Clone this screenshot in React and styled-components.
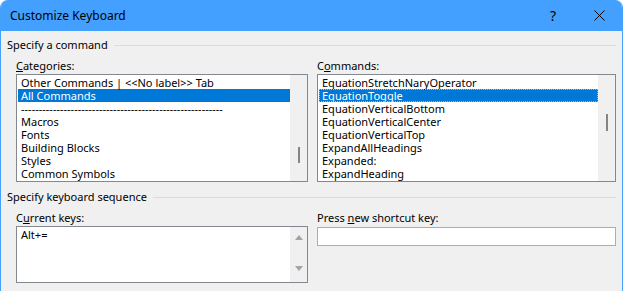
import React from 'react';
import styled, { createGlobalStyle } from 'styled-components';

const GlobalStyle = createGlobalStyle`
  html, body {
    margin: 0;
    background: #fff;
  }
  body {
    font-family: "Noto Sans", "Liberation Sans", sans-serif;
    font-size: 11px;
    color: #000;
  }
`;

const Window = styled.div`
  width: 623px;
  height: 291px;
  box-sizing: border-box;
  border-left: 1px solid #43a0ff;
  border-right: 1px solid #43a0ff;
  border-radius: 8px 8px 0 0;
  background: #f0f0f0;
  overflow: hidden;
  display: flex;
  flex-direction: column;
`;

const TitleBar = styled.div`
  height: 31px;
  flex: none;
  display: flex;
  align-items: center;
  padding-left: 9px;
  background: #43a0ff;
  font-size: 12px;
`;

const Title = styled.span`
  flex: 1;
`;

const TitleButton = styled.div`
  width: 46px;
  height: 31px;
  display: flex;
  align-items: center;
  justify-content: center;
  font-size: 14px;
`;

const Content = styled.div`
  padding: 7px 6px 0 6px;
`;

const SectionHeader = styled.div`
  display: flex;
  align-items: center;
  height: 14px;
  line-height: 14px;
  margin-top: ${p => p.gap || 0}px;

  &:after {
    content: '';
    flex: 1;
    height: 1px;
    margin-left: 6px;
    background: #dcdcdc;
  }
`;

const Columns = styled.div`
  display: grid;
  grid-template-columns: 292px 299px;
  column-gap: 9px;
  padding-left: 9px;
`;

const Field = styled.div`
  display: flex;
  flex-direction: column;
`;

const Label = styled.div`
  line-height: 13px;
  height: 13px;
  margin: 7px 0 2px;
`;

const ListBox = styled.div`
  display: flex;
  height: ${p => p.height}px;
  box-sizing: border-box;
  border: 1px solid #828790;
  background: #fff;
`;

const Items = styled.div`
  flex: 1;
  padding: 1px 0 0 1px;
  overflow: hidden;
`;

const Item = styled.div`
  height: 13px;
  line-height: 13px;
  padding-left: 3px;
  white-space: nowrap;
  background: ${p => (p.selected ? '#0078d7' : 'transparent')};
  color: ${p => (p.selected ? '#fff' : '#000')};
  outline: ${p => (p.focused ? '1px dotted #ffa64d' : 'none')};
  outline-offset: -1px;
`;

const Track = styled.div`
  width: 17px;
  flex: none;
  background: #f0f0f0;
  display: flex;
  flex-direction: column;
  align-items: center;
`;

const Thumb = styled.div`
  width: 2px;
  height: ${p => p.size}px;
  margin-top: ${p => p.offset}px;
  margin-left: 1px;
  background: #858585;
`;

const Arrow = styled.div`
  width: 0;
  height: 0;
  border-left: 4px solid transparent;
  border-right: 4px solid transparent;
  ${p => (p.down ? 'border-top: 5px solid #a3a3a3;' : 'border-bottom: 5px solid #a3a3a3;')}
  margin-top: ${p => p.offset}px;
`;

const TextBox = styled.div`
  height: 19px;
  margin-top: 1px;
  box-sizing: border-box;
  border: 1px solid #adadad;
  background: #fff;
`;

const categories = [
  'Other Commands | <<No label>> Tab',
  'All Commands',
  '-'.repeat(57),
  'Macros',
  'Fonts',
  'Building Blocks',
  'Styles',
  'Common Symbols',
];

const commands = [
  'EquationStretchNaryOperator',
  'EquationToggle',
  'EquationVerticalBottom',
  'EquationVerticalCenter',
  'EquationVerticalTop',
  'ExpandAllHeadings',
  'Expanded:',
  'ExpandHeading',
];

const CloseIcon = () => (
  <svg width="11" height="11" viewBox="0 0 11 11">
    <path d="M0.5 0.5 L10.5 10.5 M10.5 0.5 L0.5 10.5" stroke="#000" strokeWidth="1" fill="none" />
  </svg>
);

export default function App() {
  return (
    <>
      <GlobalStyle />
      <Window>
        <TitleBar>
          <Title>Customize Keyboard</Title>
          <TitleButton>?</TitleButton>
          <TitleButton>
            <CloseIcon />
          </TitleButton>
        </TitleBar>
        <Content>
          <SectionHeader>Specify a command</SectionHeader>
          <Columns>
            <Field>
              <Label><u>C</u>ategories:</Label>
              <ListBox height={108}>
                <Items>
                  {categories.map((c, i) => (
                    <Item key={i} selected={i === 1}>{c}</Item>
                  ))}
                </Items>
                <Track>
                  <Thumb size={16} offset={72} />
                </Track>
              </ListBox>
            </Field>
            <Field>
              <Label>C<u>o</u>mmands:</Label>
              <ListBox height={108}>
                <Items>
                  {commands.map((c, i) => (
                    <Item key={i} selected={i === 1} focused={i === 1}>{c}</Item>
                  ))}
                </Items>
                <Track>
                  <Thumb size={17} offset={39} />
                </Track>
              </ListBox>
            </Field>
          </Columns>
          <SectionHeader gap={8}>Specify keyboard sequence</SectionHeader>
          <Columns>
            <Field>
              <Label>C<u>u</u>rrent keys:</Label>
              <ListBox height={57}>
                <Items>
                  <Item>Alt+=</Item>
                </Items>
                <Track>
                  <Arrow offset={8} />
                  <Arrow down offset={26} />
                </Track>
              </ListBox>
            </Field>
            <Field>
              <Label>Press <u>n</u>ew shortcut key:</Label>
              <TextBox />
            </Field>
          </Columns>
        </Content>
      </Window>
    </>
  );
}
